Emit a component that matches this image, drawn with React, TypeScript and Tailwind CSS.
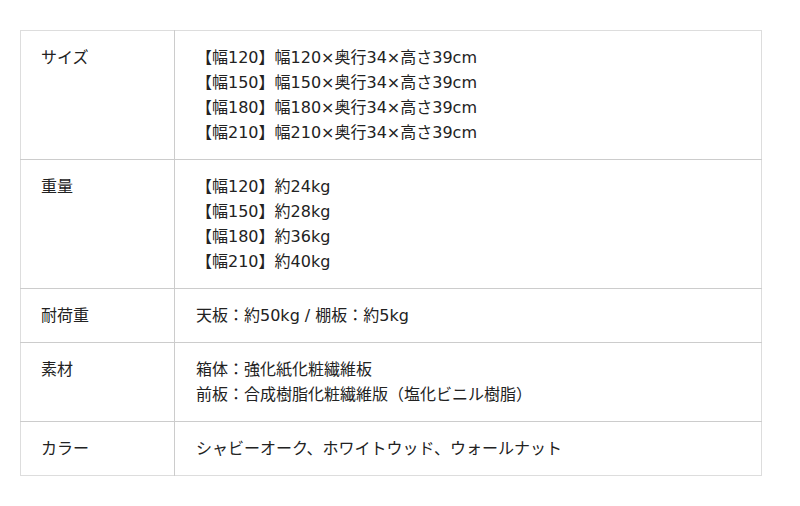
const rows: { label: string; lines: string[] }[] = [
  {
    label: "サイズ",
    lines: [
      "【幅120】幅120×奥行34×高さ39cm",
      "【幅150】幅150×奥行34×高さ39cm",
      "【幅180】幅180×奥行34×高さ39cm",
      "【幅210】幅210×奥行34×高さ39cm",
    ],
  },
  {
    label: "重量",
    lines: ["【幅120】約24kg", "【幅150】約28kg", "【幅180】約36kg", "【幅210】約40kg"],
  },
  { label: "耐荷重", lines: ["天板：約50kg / 棚板：約5kg"] },
  {
    label: "素材",
    lines: ["箱体：強化紙化粧繊維板", "前板：合成樹脂化粧繊維版（塩化ビニル樹脂）"],
  },
  { label: "カラー", lines: ["シャビーオーク、ホワイトウッド、ウォールナット"] },
];

export default function App() {
  return (
    <div className="min-h-[506px] bg-white pt-[30px] pl-[20px] font-['DejaVu_Sans','Noto_Sans_CJK_JP',sans-serif] text-[16px] leading-[25px] text-[#222]">
      <table className="w-[742px] border-collapse border border-[#ddd]">
        <tbody>
          {rows.map((row) => (
            <tr key={row.label} className="border-b border-[#ccc] last:border-b-[#ddd] align-top">
              <th className="w-[154px] border-r border-[#ccc] py-[14px] pl-[20px] text-left font-normal">
                {row.label}
              </th>
              <td className="py-[14px] pl-[21px]">
                {row.lines.map((line) => (
                  <div key={line}>{line}</div>
                ))}
              </td>
            </tr>
          ))}
        </tbody>
      </table>
    </div>
  );
}
